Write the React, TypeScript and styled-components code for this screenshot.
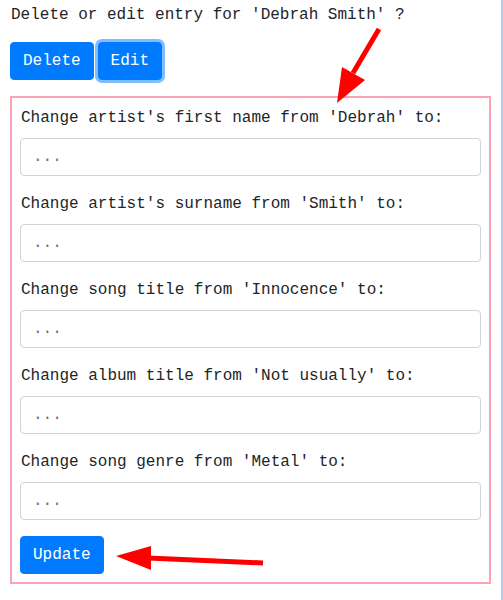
import React from 'react';
import styled, { createGlobalStyle } from 'styled-components';

const GlobalStyle = createGlobalStyle`
  html, body {
    margin: 0;
    padding: 0;
    background: #fff;
  }
  body {
    font-family: "Courier New", "Nimbus Mono PS", "FreeMono", "Liberation Mono", monospace;
    font-size: 16px;
    line-height: 1.5;
    color: #212529;
  }
`;

const Page = styled.div`
  position: relative;
  box-sizing: border-box;
  width: 503px;
  min-height: 600px;
  padding: 3px 12px 0 10px;
  border-right: 2px solid #b9cce8;
`;

const Question = styled.p`
  margin: 0 0 15px 1px;
`;

const ButtonRow = styled.div`
  display: flex;
  gap: 4px;
  margin-bottom: 16px;
`;

const Button = styled.button<{ $focused?: boolean }>`
  font-family: inherit;
  font-size: 16px;
  line-height: 1.5;
  color: #fff;
  background: #007bff;
  border: 1px solid #007bff;
  border-radius: 4px;
  padding: 6px 12px;
  cursor: pointer;
  box-shadow: ${(p) => (p.$focused ? '0 0 0 3px rgba(0, 123, 255, 0.5)' : 'none')};
`;

const EditBox = styled.form`
  box-sizing: border-box;
  width: 481px;
  border: 2px solid #f9a3b5;
  padding: 8px;
`;

const Field = styled.div`
  margin-bottom: 16px;
`;

const Label = styled.label`
  display: block;
  margin: 0 0 8px 1px;
`;

const Input = styled.input`
  box-sizing: border-box;
  display: block;
  width: 100%;
  height: 38px;
  padding: 6px 12px;
  font-family: inherit;
  font-size: 16px;
  color: #495057;
  background: #fff;
  border: 1px solid #ced4da;
  border-radius: 4px;

  &::placeholder {
    color: #6c757d;
  }
`;

const Arrows = styled.svg`
  position: absolute;
  left: 0;
  top: 0;
  pointer-events: none;
`;

const fields = [
  "Change artist's first name from 'Debrah' to:",
  "Change artist's surname from 'Smith' to:",
  "Change song title from 'Innocence' to:",
  "Change album title from 'Not usually' to:",
  "Change song genre from 'Metal' to:",
];

export default function App() {
  return (
    <>
      <GlobalStyle />
      <Page>
        <Question>Delete or edit entry for 'Debrah Smith' ?</Question>
        <ButtonRow>
          <Button type="button">Delete</Button>
          <Button type="button" $focused>Edit</Button>
        </ButtonRow>
        <EditBox onSubmit={(e) => e.preventDefault()}>
          {fields.map((f) => (
            <Field key={f}>
              <Label>{f}</Label>
              <Input placeholder="..." />
            </Field>
          ))}
          <Button type="submit">Update</Button>
        </EditBox>
        <Arrows width="503" height="600" viewBox="0 0 503 600">
          {/* arrow pointing at the edit box */}
          <line x1="379" y1="29" x2="353" y2="73" stroke="#ff0000" strokeWidth="5" />
          <polygon points="337,103 342,67 365,80" fill="#ff0000" />
          {/* arrow pointing at the update button */}
          <line x1="263" y1="563" x2="148" y2="558" stroke="#ff0000" strokeWidth="5" />
          <polygon points="116,556 151,546 151,570" fill="#ff0000" />
        </Arrows>
      </Page>
    </>
  );
}
